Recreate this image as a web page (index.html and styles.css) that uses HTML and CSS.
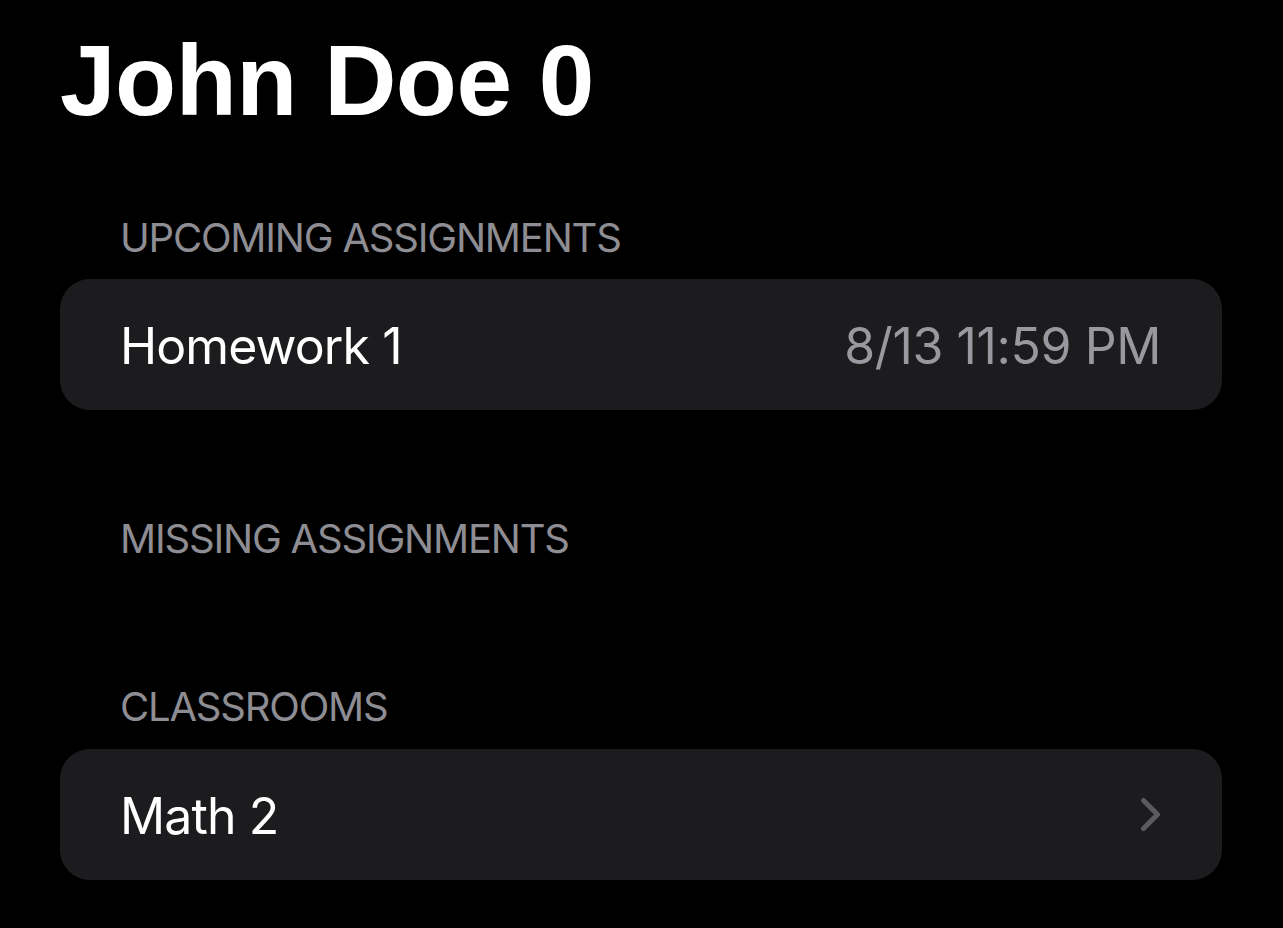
FILE: index.html
```html
<!DOCTYPE html>
<html>
<head>
<meta charset="utf-8">
<link rel="stylesheet" href="styles.css">
</head>
<body>
<main class="page">
  <h1 class="title">John Doe 0</h1>

  <section class="section section-upcoming">
    <div class="section-header">UPCOMING ASSIGNMENTS</div>
    <div class="card">
      <div class="row">
        <span class="row-label">Homework 1</span>
        <span class="row-value">8/13 11:59 PM</span>
      </div>
    </div>
  </section>

  <section class="section section-missing">
    <div class="section-header">MISSING ASSIGNMENTS</div>
  </section>

  <section class="section section-classrooms">
    <div class="section-header">CLASSROOMS</div>
    <div class="card">
      <div class="row">
        <span class="row-label">Math 2</span>
        <svg class="chevron" width="21" height="35" viewBox="0 0 21 35" aria-hidden="true">
          <path d="M3.5 3.5 L17.5 17.5 L3.5 31.5" fill="none" stroke="#5a5a5f" stroke-width="5" stroke-linecap="round" stroke-linejoin="round"/>
        </svg>
      </div>
    </div>
  </section>
</main>
</body>
</html>
```

FILE: styles.css
```css
html, body {
  margin: 0;
  padding: 0;
  background: #000000;
}

body {
  font-family: "Inter", "Liberation Sans", sans-serif;
  color: #ffffff;
}

.page {
  padding: 20px 61px 0 60px;
  display: flex;
  flex-direction: column;
}

.title {
  margin: 0;
  font-family: "Liberation Sans", "Inter", sans-serif;
  font-weight: 700;
  font-size: 100px;
  line-height: 120px;
  height: 120px;
  letter-spacing: -0.5px;
}

.section {
  display: flex;
  flex-direction: column;
}

.section-upcoming {
  margin-top: 73.5px;
}

.section-missing {
  margin-top: 104.5px;
}

.section-classrooms {
  margin-top: 120px;
}

.section-header {
  font-size: 40px;
  line-height: 48px;
  height: 48px;
  color: #8d8d93;
  padding-left: 60px;
  letter-spacing: -1.2px;
}

.section-upcoming .card {
  margin-top: 17.5px;
}

.section-classrooms .card {
  margin-top: 18.5px;
}

.card {
  background: #1c1c1e;
  border-radius: 30px;
  height: 131px;
  display: flex;
  flex-direction: column;
  justify-content: center;
}

.row {
  display: flex;
  align-items: center;
  justify-content: space-between;
  padding: 3px 61px 0 60px;
}

.row-label {
  font-size: 50px;
  line-height: 60px;
  color: #ffffff;
  letter-spacing: -0.9px;
}

.row-value {
  font-size: 50px;
  line-height: 60px;
  color: #98989e;
  letter-spacing: -0.4px;
}

.chevron {
  display: block;
  margin-top: -3px;
}
```
